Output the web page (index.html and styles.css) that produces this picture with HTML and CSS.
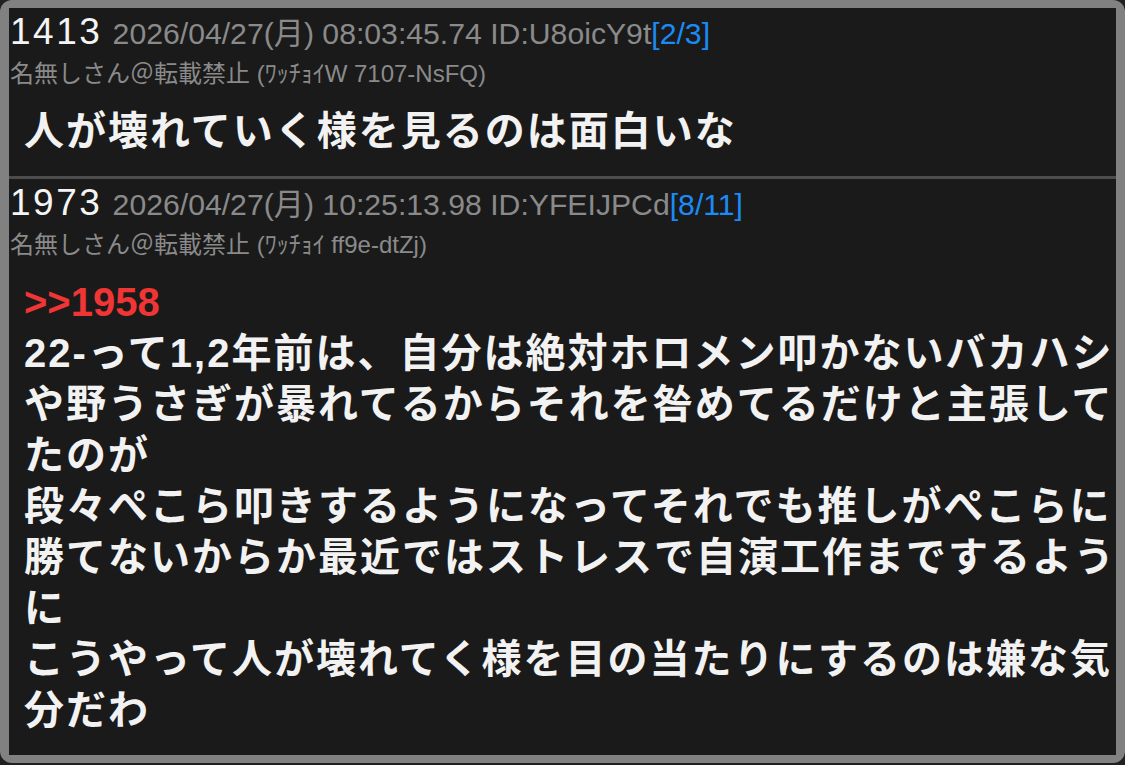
FILE: index.html
```html
<!DOCTYPE html>
<html lang="ja">
<head>
<meta charset="utf-8">
<title>thread</title>
<link rel="stylesheet" href="styles.css">
</head>
<body>
<div class="frame">
  <div class="thread">
    <article class="post">
      <div class="head"><span class="num">1413</span> <span class="meta">2026/04/27(月) 08:03:45.74 ID:U8oicY9t<span class="cnt">[2/3]</span></span></div>
      <div class="name">名無しさん＠転載禁止 <span class="trip">(ﾜｯﾁｮｲW 7107-NsFQ)</span></div>
      <div class="msg">人が壊れていく様を見るのは面白いな</div>
    </article>
    <div class="sep"></div>
    <article class="post">
      <div class="head"><span class="num">1973</span> <span class="meta">2026/04/27(月) 10:25:13.98 ID:YFEIJPCd<span class="cnt">[8/11]</span></span></div>
      <div class="name">名無しさん＠転載禁止 <span class="trip">(ﾜｯﾁｮｲ ff9e-dtZj)</span></div>
      <div class="msg"><span class="anchor">&gt;&gt;1958</span><br>22-って1,2年前は、自分は絶対ホロメン叩かないバカハシや野うさぎが暴れてるからそれを咎めてるだけと主張してたのが<br>段々ぺこら叩きするようになってそれでも推しがぺこらに勝てないからか最近ではストレスで自演工作までするように<br>こうやって人が壊れてく様を目の当たりにするのは嫌な気分だわ</div>
    </article>
  </div>
</div>
</body>
</html>
```

FILE: styles.css
```css
html, body {
  margin: 0;
  padding: 0;
}
body {
  background: #202020;
  width: 1125px;
  height: 765px;
  overflow: hidden;
  font-family: "Liberation Sans", "Noto Sans CJK JP", sans-serif;
}
.frame {
  box-sizing: border-box;
  width: 1125px;
  height: 763px;
  background: #818181;
  border-radius: 12px;
  padding: 8px 9px 8px 9px;
}
.thread {
  background: #1a1a1a;
  height: 747px;
  overflow: hidden;
}
.post {
  padding-bottom: 19px;
}
.head {
  padding-left: 1px;
  font-size: 37px;
  line-height: 48px;
  height: 48px;
  color: #f4f4f4;
  white-space: nowrap;
}
.num {
  letter-spacing: 2.5px;
}
.meta {
  font-size: 30.2px;
  color: #8a8a8a;
}
.cnt {
  color: #1b8bf5;
}
.name {
  padding-left: 1px;
  font-size: 24px;
  line-height: 36px;
  height: 36px;
  color: #8a8a8a;
  white-space: nowrap;
}
.msg {
  margin-top: 14px;
  padding-left: 15px;
  margin-right: -10px;
  font-size: 40px;
  letter-spacing: 2px;
  line-height: 51px;
  font-weight: bold;
  color: #f2f2f2;
}
.anchor {
  color: #f03535;
  letter-spacing: 0;
}
.sep {
  height: 3px;
  background: #4c4c4c;
}
```
